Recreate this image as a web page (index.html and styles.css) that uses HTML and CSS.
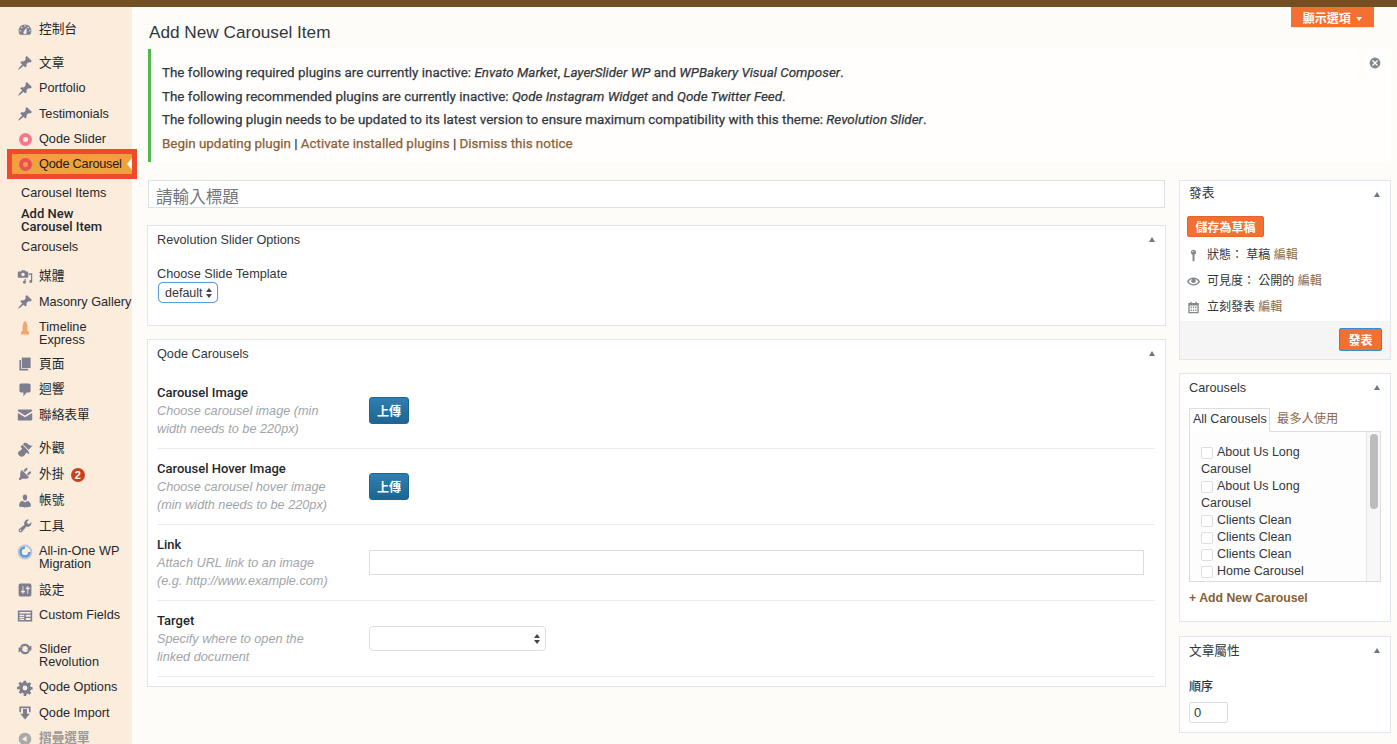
FILE: index.html
```html
<!DOCTYPE html>
<html lang="zh-Hant">
<head>
<meta charset="utf-8">
<title>Add New Carousel Item</title>
<link rel="stylesheet" href="styles.css">
</head>
<body>
<svg class="defs" width="0" height="0" aria-hidden="true">
  <symbol id="i-dash" viewBox="0 0 20 20"><path fill-rule="evenodd" d="M3.76 16h12.48c1.1-1.37 1.76-3.11 1.76-5 0-4.42-3.58-8-8-8s-8 3.58-8 8c0 1.89.66 3.63 1.76 5zM10 4c.55 0 1 .45 1 1s-.45 1-1 1-1-.45-1-1 .45-1 1-1zM6 6c.55 0 1 .45 1 1s-.45 1-1 1-1-.45-1-1 .45-1 1-1zm8 0c.55 0 1 .45 1 1s-.45 1-1 1-1-.45-1-1 .45-1 1-1zm-5.37 5.55L12 7v6c0 1.1-.9 2-2 2s-2-.9-2-2c0-.57.24-1.08.63-1.45zM4 10c.55 0 1 .45 1 1s-.45 1-1 1-1-.45-1-1 .45-1 1-1zm12 0c.55 0 1 .45 1 1s-.45 1-1 1-1-.45-1-1 .45-1 1-1z"/></symbol>
  <symbol id="i-pin" viewBox="0 0 20 20"><path d="M10.44 3.02l1.82-1.82 6.36 6.35-1.83 1.82c-1.05-.68-2.48-.57-3.41.36l-.75.75c-.92.93-1.04 2.35-.35 3.41l-1.83 1.82-2.41-2.41-2.8 2.79c-.42.42-3.38 2.71-3.8 2.29s1.86-3.39 2.28-3.81l2.79-2.79L4.1 9.36l1.83-1.82c1.05.69 2.48.57 3.4-.36l.75-.75c.93-.92 1.05-2.35.36-3.41z"/></symbol>
  <symbol id="i-media" viewBox="0 0 20 20"><path fill-rule="evenodd" d="M2 3h3l1-1.500h4L11 3h2c.6 0 1 .4 1 1v6c0 .6-.4 1-1 1H2c-.6 0-1-.4-1-1V4c0-.6.4-1 1-1zm5.500 1.800a2.200 2.200 0 1 0 0 4.400 2.200 2.200 0 0 0 0-4.400z"/><path d="M19 5v10.500a1.800 1.800 0 1 1-1.500-1.700V7l-3 .8V6zM11 12.500v4a1.800 1.800 0 1 1-1.500-1.700v-2.300z"/></symbol>
  <symbol id="i-page" viewBox="0 0 20 20"><path d="M6 2h11v13H6z"/><path d="M3 5h2v11h9v2H3z"/></symbol>
  <symbol id="i-comment" viewBox="0 0 20 20"><path d="M5 2h10c1.100 0 2 .9 2 2v7c0 1.100-.9 2-2 2h-3l-4 5v-5H5c-1.100 0-2-.9-2-2V4c0-1.100.9-2 2-2z"/></symbol>
  <symbol id="i-mail" viewBox="0 0 20 20"><path d="M1 4.500C1 3.700 1.700 3 2.500 3h15c.8 0 1.500.7 1.500 1.500v.6l-9 5.400-9-5.400z"/><path d="M1 7.400l9 5.300 9-5.300v8.100c0 .8-.7 1.500-1.500 1.500h-15C1.700 17 1 16.300 1 15.500z"/></symbol>
  <symbol id="i-brush" viewBox="0 0 20 20"><path d="M14.480 11.060L7.410 3.990l1.500-1.500c.5-.56 2.300-.47 3.510.32 1.210.8 1.430 1.280 2.910 2.100 1.180.64 2.450 1.260 4.450.85zm-.71.71L6.700 4.700 4.930 6.470c-.39.39-.39 1.020 0 1.410l1.060 1.060c.39.39.39 1.030 0 1.420-.6.6-1.430 1.110-2.210 1.690-.35.26-.7.53-1.010.84C1.430 13.230.280 15.500 2.740 18.200c2.710 2.450 4.960 1.300 6.300-.03.3-.31.58-.66.84-1.010.57-.78 1.080-1.610 1.690-2.210.39-.39 1.020-.39 1.410 0l1.060 1.060c.39.39 1.020.39 1.410 0z"/></symbol>
  <symbol id="i-plug" viewBox="0 0 20 20"><path d="M13.110 4.360L9.870 7.600 8 5.730l3.240-3.240c.35-.34 1.050-.2 1.560.32.52.51.66 1.210.31 1.550zm-8 1.770l.91-1.120 9.010 9.010-1.190.84c-.71.71-2.630 1.160-3.820 1.160H6.140L4.900 17.260c-.59.59-1.540.59-2.120 0-.59-.58-.59-1.530 0-2.120l1.240-1.240v-3.880c0-1.130.4-3.190 1.090-3.890zm7.260 3.970l3.240-3.240c.34-.35 1.040-.2 1.550.31.52.51.66 1.210.31 1.550l-3.240 3.250z"/></symbol>
  <symbol id="i-user" viewBox="0 0 20 20"><path d="M10 9.250c-2.270 0-2.730-3.440-2.730-3.440C7 4.020 7.820 2 9.970 2c2.160 0 2.980 2.020 2.710 3.810 0 0-.41 3.440-2.680 3.440zm0 2.570L12.720 10c2.390 0 4.520 2.330 4.520 4.530v2.490s-3.650 1.130-7.240 1.130c-3.650 0-7.240-1.130-7.240-1.130v-2.490c0-2.250 1.940-4.480 4.470-4.480z"/></symbol>
  <symbol id="i-tool" viewBox="0 0 20 20"><path fill-rule="evenodd" d="M16.680 9.770c-1.340 1.340-3.300 1.670-4.950.99l-5.410 6.520c-.99.99-2.590.99-3.580 0s-.99-2.590 0-3.570l6.520-5.420c-.68-1.650-.35-3.610.99-4.950 1.280-1.280 3.120-1.620 4.720-1.060l-2.890 2.890 2.820 2.820 2.860-2.870c.53 1.580.18 3.390-1.080 4.650zM3.810 16.210c.4.39 1.040.39 1.430 0 .4-.4.4-1.040 0-1.430-.39-.4-1.030-.4-1.430 0-.39.39-.39 1.030 0 1.430z"/></symbol>
  <symbol id="i-settings" viewBox="0 0 20 20"><path fill-rule="evenodd" d="M18 16V4c0-1.100-.9-2-2-2H4c-1.100 0-2 .9-2 2v12c0 1.100.9 2 2 2h12c1.100 0 2-.9 2-2zM8 11h1c.55 0 1 .45 1 1s-.45 1-1 1H8v1.500c0 .28-.22.5-.5.5s-.5-.22-.5-.5V13H6c-.55 0-1-.45-1-1s.45-1 1-1h1V5.500c0-.28.22-.5.5-.5s.5.22.5.5V11zm5-2h-1c-.55 0-1-.45-1-1s.45-1 1-1h1V5.500c0-.28.22-.5.5-.5s.5.22.5.5V7h1c.55 0 1 .45 1 1s-.45 1-1 1h-1v5.500c0 .28-.22.5-.5.5s-.5-.22-.5-.5V9z"/></symbol>
  <symbol id="i-fields" viewBox="0 0 20 20"><path fill-rule="evenodd" d="M1 3h18v14H1zm2 2v2h14V5zm0 3.500V10h6V8.500zm0 2.500v1.500h6V11zm0 2.500V15h6v-1.500zm8-5V11h6V8.500zm0 4V15h6v-2.500z"/></symbol>
  <symbol id="i-sync" viewBox="0 0 20 20"><path d="M10 3.500a6.500 6.500 0 0 1 5.800 3.600L18 5.500V12h-6.300l2.200-1.900A4.500 4.500 0 0 0 5.800 8H3.700A6.500 6.500 0 0 1 10 3.500z"/><path d="M10 16.500a6.500 6.500 0 0 1-5.800-3.600L2 14.500V8h6.300L6.100 9.900a4.500 4.500 0 0 0 8.100 2.100h2.100a6.500 6.500 0 0 1-6.300 4.500z"/></symbol>
  <symbol id="i-gear" viewBox="0 0 20 20"><path fill-rule="evenodd" d="M8.500 1h3l.5 2.600 1.500.6 2.200-1.500 2.100 2.100-1.500 2.200.6 1.500 2.600.5v3l-2.600.5-.6 1.500 1.500 2.200-2.100 2.100-2.200-1.500-1.500.6-.5 2.600h-3L8 16.400l-1.500-.6-2.200 1.500-2.100-2.100 1.500-2.200-.6-1.500L0 11.500v-3l2.600-.5.6-1.500-1.500-2.200 2.100-2.100 2.200 1.500 1.500-.6zM10 7a3 3 0 1 0 0 6 3 3 0 0 0 0-6z"/></symbol>
  <symbol id="i-import" viewBox="0 0 20 20"><path d="M3 2h14v7h-2V4H5v5H3z"/><path d="M7.500 5h5v6H16l-6 7-6-7h3.500z"/></symbol>
  <symbol id="i-collapse" viewBox="0 0 20 20"><path fill-rule="evenodd" d="M10 2.160c4.330 0 7.840 3.510 7.840 7.840s-3.510 7.840-7.840 7.840S2.160 14.330 2.160 10 5.710 2.160 10 2.160zm2 11.720V6.120L6.180 9.970z"/></symbol>
  <symbol id="i-eye" viewBox="0 0 20 20"><path fill-rule="evenodd" d="M19.700 9.400C17.700 6 14 3.900 10 3.900S2.300 6 .3 9.400L0 10l.3.6c2 3.400 5.700 5.500 9.700 5.500s7.700-2.100 9.700-5.500l.3-.6-.3-.6zM10 14.100c-3.100 0-6-1.600-7.700-4.100C3.600 8 5.700 6.600 8 6.100c-.9.6-1.500 1.700-1.500 2.900 0 1.900 1.600 3.500 3.500 3.500s3.500-1.600 3.500-3.500c0-1.200-.6-2.300-1.500-2.900 2.300.5 4.400 1.900 5.700 3.900-1.700 2.500-4.600 4.100-7.700 4.100z"/></symbol>
  <symbol id="i-cal" viewBox="0 0 20 20"><path fill-rule="evenodd" d="M5 1h2v2h6V1h2v2h3v16H2V3h3zM4 7v10h12V7zm1.500 1.500h2V11h-2zm3.500 0h2V11H9zm3.500 0h2V11h-2zM5.500 13h2v2.500h-2zM9 13h2v2.500H9zm3.500 0h2v2.500h-2z"/></symbol>
  <symbol id="i-mappin" viewBox="0 0 20 20"><path fill-rule="evenodd" d="M10 1a4 4 0 0 1 1.500 7.700V19h-3V8.700A4 4 0 0 1 10 1zM9 3a1 1 0 1 0 0 2 1 1 0 0 0 0-2z"/></symbol>
</svg>

<div class="topbar"></div>
<div class="layout">
  <nav class="sidebar">
    <ul class="menu">
      <li class="item gap-after"><svg class="ico"><use href="#i-dash"/></svg><span>控制台</span></li>
      <li class="item"><svg class="ico"><use href="#i-pin"/></svg><span>文章</span></li>
      <li class="item"><svg class="ico"><use href="#i-pin"/></svg><span>Portfolio</span></li>
      <li class="item"><svg class="ico"><use href="#i-pin"/></svg><span>Testimonials</span></li>
      <li class="item"><span class="ring"></span><span>Qode Slider</span></li>
      <li class="item current"><span class="ring"></span><span class="current-label">Qode Carousel</span></li>
      <li class="submenu">
        <a>Carousel Items</a>
        <a class="sub-active">Add New Carousel Item</a>
        <a>Carousels</a>
      </li>
      <li class="item"><svg class="ico"><use href="#i-media"/></svg><span>媒體</span></li>
      <li class="item"><svg class="ico"><use href="#i-pin"/></svg><span>Masonry Gallery</span></li>
      <li class="item item-tight"><svg class="ico rocket" viewBox="0 0 20 20"><path d="M10 1c2 2 3 4.500 3 7v5l2 2v3H5v-3l2-2V8c0-2.500 1-5 3-7z"/></svg><span>Timeline Express</span></li>
      <li class="item"><svg class="ico"><use href="#i-page"/></svg><span>頁面</span></li>
      <li class="item"><svg class="ico"><use href="#i-comment"/></svg><span>迴響</span></li>
      <li class="item gap-after"><svg class="ico"><use href="#i-mail"/></svg><span>聯絡表單</span></li>
      <li class="item"><svg class="ico"><use href="#i-brush"/></svg><span>外觀</span></li>
      <li class="item"><svg class="ico"><use href="#i-plug"/></svg><span>外掛 <b class="badge">2</b></span></li>
      <li class="item"><svg class="ico"><use href="#i-user"/></svg><span>帳號</span></li>
      <li class="item"><svg class="ico"><use href="#i-tool"/></svg><span>工具</span></li>
      <li class="item"><svg class="ico aio" viewBox="0 0 20 20"><circle cx="10" cy="10" r="8" fill="none" stroke="#b5c6da" stroke-width="2.500"/><path d="M10 3a7 7 0 1 0 7 7h-3a4 4 0 1 1-4-4z" fill="#5b9bd5"/></svg><span>All-in-One WP Migration</span></li>
      <li class="item"><svg class="ico"><use href="#i-settings"/></svg><span>設定</span></li>
      <li class="item gap-after"><svg class="ico"><use href="#i-fields"/></svg><span>Custom Fields</span></li>
      <li class="item"><svg class="ico"><use href="#i-sync"/></svg><span>Slider Revolution</span></li>
      <li class="item"><svg class="ico"><use href="#i-gear"/></svg><span>Qode Options</span></li>
      <li class="item"><svg class="ico"><use href="#i-import"/></svg><span>Qode Import</span></li>
      <li class="item collapse"><svg class="ico"><use href="#i-collapse"/></svg><span>摺疊選單</span></li>
    </ul>
  </nav>

  <main class="main">
    <header class="page-head">
      <h1>Add New Carousel Item</h1>
      <button class="screen-opts">顯示選項 <i class="caret"></i></button>
    </header>

    <section class="notice">
      <p>The following required plugins are currently inactive: <em>Envato Market</em>, <em>LayerSlider WP</em> and <em>WPBakery Visual Composer</em>.</p>
      <p>The following recommended plugins are currently inactive: <em>Qode Instagram Widget</em> and <em>Qode Twitter Feed</em>.</p>
      <p>The following plugin needs to be updated to its latest version to ensure maximum compatibility with this theme: <em>Revolution Slider</em>.</p>
      <p><a>Begin updating plugin</a> | <a>Activate installed plugins</a> | <a>Dismiss this notice</a></p>
      <svg class="notice-x" viewBox="0 0 20 20"><path fill-rule="evenodd" d="M10 1a9 9 0 1 1 0 18 9 9 0 0 1 0-18zM6.500 5L5 6.500 8.500 10 5 13.500 6.500 15 10 11.500 13.500 15 15 13.500 11.500 10 15 6.500 13.500 5 10 8.500z"/></svg>
    </section>

    <div class="columns">
      <div class="col-main">
        <div class="title-input">請輸入標題</div>

        <section class="box box-rev">
          <h2 class="box-title">Revolution Slider Options<i class="tri"></i></h2>
          <div class="rev-body">
            <label class="rev-label">Choose Slide Template</label>
            <div class="select-focus">default<span class="updown"></span></div>
          </div>
        </section>

        <section class="box box-car">
          <h2 class="box-title">Qode Carousels<i class="tri"></i></h2>
          <div class="rows">
            <div class="row">
              <div class="row-text"><h4>Carousel Image</h4><p>Choose carousel image (min width needs to be 220px)</p></div>
              <button class="upload">上傳</button>
            </div>
            <div class="row">
              <div class="row-text"><h4>Carousel Hover Image</h4><p>Choose carousel hover image (min width needs to be 220px)</p></div>
              <button class="upload">上傳</button>
            </div>
            <div class="row">
              <div class="row-text"><h4>Link</h4><p>Attach URL link to an image (e.g. http://www.example.com)</p></div>
              <div class="text-field"></div>
            </div>
            <div class="row">
              <div class="row-text"><h4>Target</h4><p>Specify where to open the linked document</p></div>
              <div class="select-field"><span class="updown"></span></div>
            </div>
          </div>
        </section>
      </div>

      <aside class="col-side">
        <section class="box box-pub">
          <h2 class="box-title">發表<i class="tri"></i></h2>
          <div class="pub-body">
            <button class="btn-orange btn-save">儲存為草稿</button>
            <div class="pub-row"><svg class="pub-ico"><use href="#i-mappin"/></svg>狀態： 草稿 <a>編輯</a></div>
            <div class="pub-row"><svg class="pub-ico"><use href="#i-eye"/></svg>可見度： 公開的 <a>編輯</a></div>
            <div class="pub-row"><svg class="pub-ico"><use href="#i-cal"/></svg>立刻發表 <a>編輯</a></div>
          </div>
          <div class="pub-foot"><button class="btn-orange btn-publish">發表</button></div>
        </section>

        <section class="box box-tax">
          <h2 class="box-title">Carousels<i class="tri"></i></h2>
          <div class="tax-body">
            <div class="tabs"><span class="tab tab-on">All Carousels</span><span class="tab">最多人使用</span></div>
            <div class="checklist">
              <ul>
                <li><i class="check"></i>About Us Long Carousel</li>
                <li><i class="check"></i>About Us Long Carousel</li>
                <li><i class="check"></i>Clients Clean</li>
                <li><i class="check"></i>Clients Clean</li>
                <li><i class="check"></i>Clients Clean</li>
                <li><i class="check"></i>Home Carousel</li>
              </ul>
              <div class="scrollbar"><span class="thumb"></span></div>
            </div>
            <a class="add-new">+ Add New Carousel</a>
          </div>
        </section>

        <section class="box box-attr">
          <h2 class="box-title">文章屬性<i class="tri"></i></h2>
          <div class="attr-body">
            <div class="attr-label">順序</div>
            <div class="num-field">0</div>
          </div>
        </section>
      </aside>
    </div>
  </main>
</div>
</body>
</html>
```

FILE: styles.css
```css
* { box-sizing: border-box; }
html, body { margin: 0; padding: 0; height: 744px; overflow: hidden; }
body {
  background: #fefcf8;
  color: #32373c;
  font-family: "Liberation Sans", "Noto Sans CJK TC", sans-serif;
  font-size: 13px;
}
.defs { position: absolute; }
ul { list-style: none; margin: 0; padding: 0; }
h1, h2, h4, p { margin: 0; font-weight: normal; }
button { font-family: inherit; cursor: pointer; }
a { color: #8a6036; }

.topbar { height: 7px; background: #744f24; }
.layout { display: flex; height: 737px; }

/* sidebar */
.sidebar { width: 132px; flex: none; background: #fcecdc; padding-top: 9.750px; font-size: 12.700px; position: relative; z-index: 1; }
.item {
  display: flex;
  padding: 6.250px 0 6.250px 17px;
  line-height: 13px;
  color: #23282d;
  position: relative;
}
.item-tight { padding-bottom: 4.250px; }
.gap-after { margin-bottom: 8px; }
.ico { width: 16px; height: 16px; flex: none; margin: -1.500px 6px -1.500px 0; fill: #7d7e8f; }
.rocket { fill: #f3a66b; }
.ring {
  width: 13px; height: 13px; flex: none; margin: 0 7px 0 2px;
  border: 4px solid #f27a8c; border-radius: 50%;
  background: #fcecdc;
}
.current {
  margin: -3.250px -5px -1.250px 7px;
  padding: 4px 0 3px 5px;
  border: 5px solid #ee4a2b;
  background: #f1a03f;
  color: #1b1b1b;
  width: 130px;
  white-space: nowrap;
}
.current-label { letter-spacing: -.2px; }
.current .ring { border-color: #ed4f57; background: #f1a03f; }
.current::after {
  content: "";
  position: absolute;
  right: 0; top: 50%;
  margin-top: -6px;
  border: 6px solid transparent;
  border-left-width: 0;
  border-right-width: 5px;
  border-right-color: #fefcf8;
}
.submenu { padding: 9.250px 0 9.750px 21px; }
.submenu a { display: block; line-height: 13px; color: #23282d; margin-bottom: 6.500px; width: 100px; }
.submenu .sub-active { font-family: Roboto, "Noto Sans CJK TC", sans-serif; font-weight: 500; font-size: 13px; margin-bottom: 8.500px; }
.submenu a:last-child { margin-bottom: 0; }
.badge {
  display: inline-block;
  width: 14px; height: 14px; line-height: 14px;
  margin-left: 3px;
  border-radius: 50%;
  background: #c8401e;
  color: #fff;
  font-size: 11px;
  text-align: center;
  vertical-align: top;
}
.collapse { color: #9a9a9a; font-weight: bold; }
.collapse .ico { fill: #a9a9a9; }

/* main */
.main { flex: 1; min-width: 0; padding-left: 15px; padding-right: 6px; }
.page-head { display: flex; justify-content: space-between; align-items: flex-start; height: 42px; padding-right: 17px; }
h1 { font-size: 17.200px; line-height: 24px; margin: 13px 0 0 2px; color: #32373c; }
.screen-opts {
  width: 83px; height: 21px; padding: 0;
  background: #f36f32; color: #fff;
  border: 0; border-bottom: 1px solid #e8e8e8;
  font-size: 12px; font-weight: bold;
}
.caret {
  display: inline-block; width: 0; height: 0; margin-left: 2px;
  border: 3.500px solid transparent; border-top: 4px solid #fff; border-bottom: 0;
  vertical-align: middle;
}

.notice {
  position: relative;
  height: 113px;
  margin-left: 1px;
  padding: 16px 0 0 11px;
  background: #fffefc;
  border-left: 3px solid #4fb84f;
  font-family: Roboto, "Noto Sans CJK TC", sans-serif;
  font-size: 13.400px;
  font-weight: 500;
  -webkit-text-stroke: .25px currentColor;
  color: #32373c;
}
.notice p { line-height: 15px; margin-bottom: 8.600px; }
.notice a { color: #8a6036; }
.notice-x { position: absolute; right: 10px; top: 8px; width: 12px; height: 12px; fill: #82878c; }

.columns { display: flex; gap: 13px; margin-top: 18px; }
.col-main { width: 1019px; flex: none; }
.col-side { width: 212px; flex: none; }

.title-input {
  height: 28px;
  margin: 0 1px 17px;
  padding-left: 7px;
  background: #fff;
  border: 1px solid #dde1e6;
  font-size: 16.600px;
  line-height: 33px;
  color: #72777c;
  overflow: hidden;
}
.box { background: #fff; border: 1px solid #e1e7ef; }
.box-title {
  position: relative;
  height: 28px;
  padding-left: 9px;
  font-size: 12.700px;
  line-height: 28px;
  color: #32373c;
}
.box-pub .box-title { line-height: 25px; }
.tri {
  position: absolute; right: 10px; top: 11px;
  border: 3.500px solid transparent;
  border-top: 0;
  border-bottom: 5px solid #72777c;
}
.box-rev { height: 101px; margin-bottom: 13px; }
.rev-body { padding: 13px 9px 0; }
.rev-label { display: block; line-height: 15px; font-size: 12.700px; }
.select-focus {
  position: relative;
  width: 60px; height: 21px;
  margin: 0 0 0 1px;
  padding-left: 6px;
  border: 1px solid #5b9dd9;
  border-radius: 5px;
  box-shadow: 0 0 1px rgba(30,140,190,.6);
  line-height: 21px;
  font-size: 12.500px;
  background: #fff;
}
.updown { position: absolute; right: 4px; top: 50%; margin-top: -5px; width: 7px; height: 10px; }
.updown::before, .updown::after {
  content: ""; position: absolute; left: 0;
  border-left: 3.500px solid transparent; border-right: 3.500px solid transparent;
}
.updown::before { top: 0; border-bottom: 4px solid #444; }
.updown::after { bottom: 0; border-top: 4px solid #444; }

.box-car { height: 348px; }
.rows { padding: 16px 10px 0 9px; }
.row { display: flex; height: 76px; border-bottom: 1px solid #ececec; }
.row + .row { padding-top: 11px; }
.row:first-child { height: 65px; }
.row-text { width: 212px; flex: none; }
.row-text h4 { line-height: 18px; font-size: 13px; font-family: Roboto, "Noto Sans CJK TC", sans-serif; font-weight: 500; color: #23282d; }
.row-text p { width: 180px; line-height: 18px; font-size: 12.700px; font-style: italic; color: #a1a5a9; }
.upload {
  width: 40px; height: 27px; padding: 0; margin-top: 13px;
  background: linear-gradient(#2f7fb0, #1d6593);
  border: 1px solid #1d6593;
  border-radius: 3px;
  color: #fff; font-size: 12px; font-weight: bold;
}
.text-field { width: 775px; height: 25px; margin-top: 14px; border: 1px solid #dddddd; background: #fff; }
.select-field { position: relative; width: 177px; height: 25px; margin-top: 14px; border: 1px solid #dddddd; border-radius: 4px; background: #fff; }

.box-pub { height: 180px; display: flex; flex-direction: column; margin-bottom: 13px; }
.pub-body { flex: 1; padding: 7px 7px 0; }
.btn-orange {
  background: #f36f32; color: #fff;
  border: 1px solid #e2662c; border-radius: 2px;
  font-size: 12px; font-weight: bold; padding: 0;
}
.btn-save { display: block; width: 77px; height: 21px; margin-bottom: 5px; }
.pub-row { display: flex; align-items: center; height: 26px; line-height: 16px; color: #32373c; white-space: pre; font-size: 12px; }
.pub-row a { color: #8a6b50; }
.pub-ico { width: 13px; height: 13px; margin-right: 7px; fill: #82878c; flex: none; }
.pub-foot { height: 38px; background: #f5f5f5; display: flex; justify-content: flex-end; padding: 7px 8px 0 0; }
.btn-publish { width: 43px; height: 23px; border: 1px solid #2e8fd6; }

.box-tax { height: 249px; margin-bottom: 14px; }
.tax-body { padding: 6px 9px 0; }
.tabs { display: flex; height: 24px; position: relative; z-index: 1; }
.tab { padding: 0 3px; line-height: 23px; font-size: 12.250px; color: #8a6b50; margin-left: 4px; }
.tab-on { margin-left: 0; line-height: 21px; font-size: 12.500px; color: #32373c; background: #fff; border: 1px solid #dddddd; border-bottom-color: #fff; width: 81px; white-space: nowrap; }
.checklist {
  display: flex;
  height: 151px;
  margin-top: -1px;
  border: 1px solid #dddddd;
  background: #fdfdfd;
  overflow: hidden;
  width: 192px;
}
.checklist ul { flex: 1; padding: 12px 0 0 11px; }
.checklist li { line-height: 17px; font-size: 12.500px; width: 145px; }
.check {
  display: inline-block;
  width: 12px; height: 12px; margin-right: 4px;
  border: 1px solid #dddddd; border-radius: 2px; background: #fff;
  vertical-align: -3px;
}
.scrollbar { width: 14px; flex: none; background: #f7f7f7; border-left: 1px solid #e8e8e8; padding: 2px 3px; }
.thumb { display: block; width: 8px; height: 75px; border-radius: 4px; background: #bcbcbc; }
.add-new { display: block; margin-top: 9px; line-height: 15px; font-weight: bold; color: #8a6036; font-size: 12.300px; }

.box-attr { height: 97px; }
.attr-body { padding: 14px 9px 0; }
.attr-label { line-height: 16px; font-weight: 500; font-size: 12px; }
.num-field { width: 39px; height: 21px; margin-top: 7px; padding-left: 4px; border: 1px solid #dddddd; border-radius: 2px; line-height: 19px; background: #fff; }
```
